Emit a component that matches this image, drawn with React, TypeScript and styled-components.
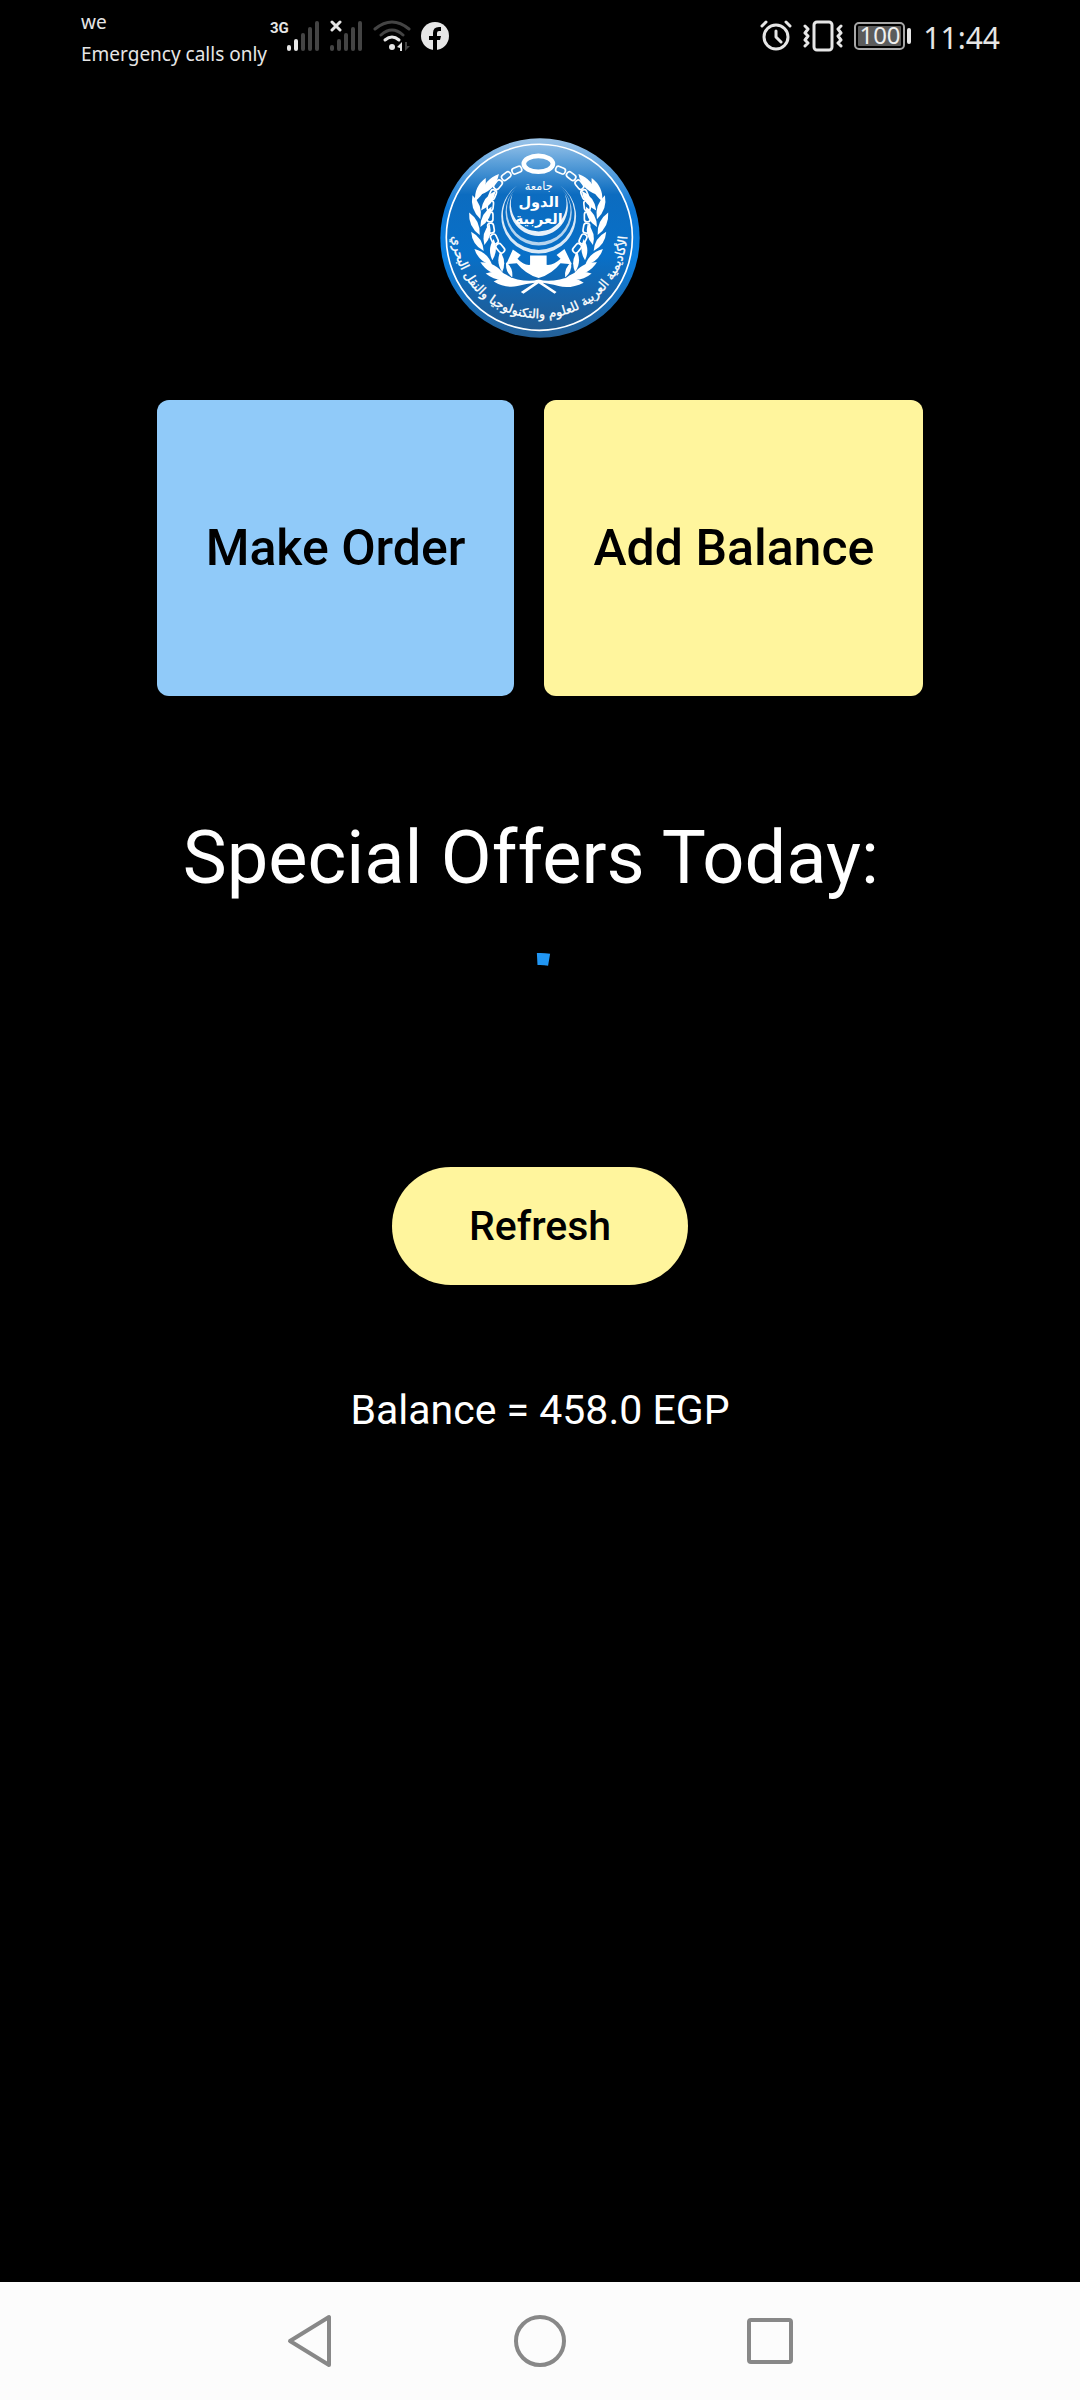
import React from "react";
import styled, { createGlobalStyle } from "styled-components";

const GlobalStyle = createGlobalStyle`
  * { box-sizing: border-box; }
  body { margin: 0; background: #000; font-family: Roboto, "Noto Sans", sans-serif; }
  h1, p { margin: 0; font-weight: 400; }
  button { border: 0; padding: 0; font-family: inherit; cursor: pointer; }
  svg { display: block; flex: none; }
`;

const Screen = styled.div`
  min-height: 100vh;
  display: flex;
  flex-direction: column;
  background: #000;
  color: #fff;
`;

const StatusBar = styled.header`
  height: 72px;
  flex: none;
  display: flex;
  justify-content: space-between;
  align-items: center;
  padding: 0 80px 0 81px;
  color: #e6e6e6;
  font-family: "Noto Sans", sans-serif;
`;

const StatusGroup = styled.div<{ $gap: number }>`
  display: flex;
  align-items: center;
  gap: ${(p) => p.$gap}px;
`;

const Carrier = styled.div`
  font-size: 19px;
  line-height: 32px;
  padding-top: 4px;
  white-space: nowrap;
`;

const Clock = styled.time`
  font-size: 30px;
  line-height: 40px;
  padding-top: 4px;
`;

const Main = styled.main`
  flex: 1;
  display: flex;
  flex-direction: column;
  align-items: center;
  padding-top: 66px;
`;

const Actions = styled.div`
  display: flex;
  gap: 30px;
  margin-top: 62px;
`;

const ActionButton = styled.button<{ $color: string }>`
  height: 296px;
  padding: 0 49px;
  border-radius: 12px;
  background: ${(p) => p.$color};
  color: #000;
  font-size: 50px;
  font-weight: 500;
`;

const Heading = styled.h1`
  margin-top: 118px;
  font-size: 74px;
  line-height: 88px;
  white-space: pre;
`;

const SpinnerBox = styled.div`
  margin-top: 51px;
`;

const RefreshButton = styled.button`
  width: 296px;
  height: 118px;
  margin-top: 94px;
  border-radius: 59px;
  background: #fff59d;
  color: #000;
  font-size: 41px;
  font-weight: 500;
`;

const Balance = styled.p`
  margin-top: 101px;
  font-size: 41px;
  line-height: 48px;
`;

const NavBar = styled.nav`
  height: 118px;
  flex: none;
  display: flex;
  justify-content: center;
  gap: 130px;
  background: #fcfcfc;
`;

const NavButton = styled.button`
  width: 100px;
  height: 118px;
  display: flex;
  align-items: center;
  justify-content: center;
  background: transparent;
`;

const LEAVES: [number, number, number, number][] = [
  [152, 194, 206, 132],
  [134, 214, 166, 144],
  [152, 242, 196, 182],
  [150, 268, 126, 196],
  [150, 292, 184, 230],
  [148, 316, 116, 248],
  [162, 346, 178, 282],
  [160, 364, 122, 306],
  [186, 392, 190, 328],
  [186, 408, 132, 358],
  [216, 428, 210, 366],
  [222, 436, 150, 398],
  [246, 444, 228, 398],
  [244, 446, 166, 432],
];

const CHAIN: [number, number, number][] = [
  [260, 120, -22],
  [228, 138, -38],
  [203, 164, -52],
  [187, 194, -68],
  [180, 227, -84],
  [179, 261, 90],
  [182, 295, 80],
  [192, 328, 65],
  [210, 356, 50],
];

function leafPath([x1, y1, x2, y2]: [number, number, number, number]) {
  const mx = (x1 + x2) / 2;
  const my = (y1 + y2) / 2;
  const nx = (y2 - y1) * 0.28;
  const ny = (x1 - x2) * 0.28;
  return `M${x1} ${y1}Q${mx + nx} ${my + ny} ${x2} ${y2}Q${mx - nx} ${my - ny} ${x1} ${y1}Z`;
}

function Wreath() {
  return (
    <>
      {LEAVES.map((leaf, i) => (
        <path key={i} d={leafPath(leaf)} fill="#fff" />
      ))}
      {CHAIN.map(([x, y, a], i) => (
        <rect
          key={i}
          x={x - 15}
          y={y - 9}
          width="30"
          height="18"
          rx="8"
          fill="none"
          stroke="#fff"
          strokeWidth="5"
          transform={`rotate(${a} ${x} ${y})`}
        />
      ))}
    </>
  );
}

function AcademyLogo() {
  return (
    <svg width="200" height="200" viewBox="28 23 604 604" role="img" aria-label="Academy emblem">
      <defs>
        <linearGradient id="disc" x1="0" y1="0" x2="0" y2="1">
          <stop offset="0" stopColor="#8dbce6" />
          <stop offset="0.1" stopColor="#5a9fd9" />
          <stop offset="0.27" stopColor="#0c6cc0" />
          <stop offset="0.6" stopColor="#0870c8" />
          <stop offset="0.82" stopColor="#1763a8" />
          <stop offset="1" stopColor="#205a90" />
        </linearGradient>
        <linearGradient id="rim" x1="0" y1="0" x2="0" y2="1">
          <stop offset="0" stopColor="#9cc4e8" />
          <stop offset="0.35" stopColor="#0d78d6" />
          <stop offset="0.6" stopColor="#0a80e2" />
          <stop offset="1" stopColor="#245f96" />
        </linearGradient>
        <path id="motto" d="M66 270A265 265 0 1 0 592 270" />
      </defs>
      <circle cx="330" cy="325" r="301" fill="url(#rim)" />
      <circle cx="328" cy="323" r="281" fill="url(#disc)" stroke="#fff" strokeWidth="5" />
      <Wreath />
      <g transform="translate(652 0) scale(-1 1)">
        <Wreath />
      </g>
      <ellipse cx="325" cy="101" rx="44" ry="24" fill="none" stroke="#fff" strokeWidth="14" />
      <g fill="#fff">
        <path d="M262 166A113 113 0 1 0 390 166A108 108 0 1 1 262 166Z" opacity="0.85" />
        <path d="M256 176A100 100 0 1 0 396 176A96 96 0 1 1 256 176Z" opacity="0.7" />
        <path d="M248 190A88 88 0 1 0 404 190A84 84 0 1 1 248 190Z" opacity="0.9" />
        <path d="M248 360L228 404L260 401Q286 434 326 446Q366 434 392 401L426 404L404 358L380 376L392 388Q372 408 350 406L350 378L300 378L300 406Q280 408 262 388L272 376Z" />
        <path d="M190 456Q226 436 262 450Q300 458 326 450Q352 458 390 450Q426 436 462 460Q420 480 386 470Q356 462 338 460L380 488L374 493L326 462L280 493L272 488L314 460Q290 462 262 470Q226 478 190 456Z" />
      </g>
      <g
        fill="#fff"
        fontFamily='"DejaVu Sans", sans-serif'
        textAnchor="middle"
        direction="rtl"
      >
        <text x="326" y="180" fontSize="34">جامعة</text>
        <text x="326" y="230" fontSize="44" fontWeight="700">الدول</text>
        <text x="326" y="282" fontSize="44" fontWeight="700">العربية</text>
        <text fontSize="38" stroke="#fff" strokeWidth="1">
          <textPath href="#motto" startOffset="50%">
            الأكاديمية العربية للعلوم والتكنولوجيا والنقل البحري
          </textPath>
        </text>
      </g>
    </svg>
  );
}

function Signal({ lit, label }: { lit: number; label: "3G" | "none" }) {
  return (
    <svg width={label === "3G" ? 51 : 33} height="40" viewBox={label === "3G" ? "-18 -4 51 40" : "0 -4 33 40"} aria-hidden="true">
      {[6, 12, 18, 24, 30].map((h, i) => (
        <rect key={h} x={i * 7} y={31 - h} width="4" height={h} rx="2" fill={i < lit ? "#e6e6e6" : "#444"} />
      ))}
      {label === "3G" ? (
        <text x="-17" y="13" fill="#e6e6e6" fontSize="15" fontWeight="700" fontFamily="Roboto, sans-serif">
          3G
        </text>
      ) : (
        <path d="M2 2l8 8M10 2l-8 8" stroke="#e6e6e6" strokeWidth="3" strokeLinecap="round" />
      )}
    </svg>
  );
}

function Wifi() {
  return (
    <svg width="38" height="32" viewBox="0 0 38 32" fill="none" strokeLinecap="round" strokeWidth="3" aria-hidden="true">
      <path d="M2 9Q19-5 36 9M8 15Q19 5 30 15" stroke="#444" />
      <path d="M12 20Q19 14 26 20" stroke="#e6e6e6" />
      <circle cx="19" cy="27" r="3" fill="#e6e6e6" />
      <path d="M29 22v9h-2v-3l-3-1z" fill="#e6e6e6" />
      <path d="M32 22v9l5-5h-3v-4z" fill="#444" />
    </svg>
  );
}

function Facebook() {
  return (
    <svg width="28" height="28" viewBox="0 0 28 28" aria-hidden="true">
      <circle cx="14" cy="14" r="14" fill="#e6e6e6" />
      <path d="M12 28V18H8V14H12V11Q12 5 18 5H20V9H18Q16 9 16 11V14H20L19 18H16V28Z" fill="#000" />
    </svg>
  );
}

function Alarm() {
  return (
    <svg width="32" height="32" viewBox="0 0 32 32" fill="none" stroke="#e6e6e6" strokeWidth="3" strokeLinecap="round" strokeLinejoin="round" aria-hidden="true">
      <circle cx="16" cy="17" r="12" />
      <path d="M16 11v6l5 5M2 6l4-4M30 6l-4-4" />
    </svg>
  );
}

function Vibrate() {
  return (
    <svg width="40" height="32" viewBox="0 0 40 32" fill="none" stroke="#e6e6e6" strokeWidth="3" strokeLinecap="round" strokeLinejoin="round" aria-hidden="true">
      <rect x="11" y="2" width="18" height="28" rx="3" />
      <path d="M2 6l3 3-3 4 3 3-3 4 3 3-3 3M38 6l-3 3 3 4-3 3 3 4-3 3 3 3" />
    </svg>
  );
}

function Battery() {
  return (
    <svg width="58" height="40" viewBox="0 -6 58 40" aria-hidden="true">
      <rect x="1" y="1" width="49" height="26" rx="4" fill="none" stroke="#a8a8a8" strokeWidth="2" />
      <rect x="4" y="4" width="43" height="20" rx="1" fill="#5c5c5c" />
      <rect x="53" y="6" width="4" height="16" rx="2" fill="#e6e6e6" />
      <text x="26" y="22" fill="#f0f0f0" fontSize="24" fontFamily='"Noto Sans", sans-serif' textAnchor="middle">
        100
      </text>
    </svg>
  );
}

function Spinner() {
  return (
    <svg width="120" height="120" viewBox="0 0 120 120" role="progressbar" aria-label="Loading offers">
      <circle
        cx="60"
        cy="60"
        r="54"
        fill="none"
        stroke="#2196f3"
        strokeWidth="12"
        strokeDasharray="12 400"
        transform="rotate(-93 60 60)"
      />
    </svg>
  );
}

export default function App() {
  return (
    <Screen>
      <GlobalStyle />
      <StatusBar>
        <StatusGroup $gap={2}>
          <Carrier>
            we
            <br />
            Emergency calls only
          </Carrier>
          <StatusGroup $gap={10}>
            <Signal lit={2} label="3G" />
            <Signal lit={0} label="none" />
            <Wifi />
            <Facebook />
          </StatusGroup>
        </StatusGroup>
        <StatusGroup $gap={11}>
          <Alarm />
          <Vibrate />
          <Battery />
          <Clock>11:44</Clock>
        </StatusGroup>
      </StatusBar>
      <Main>
        <AcademyLogo />
        <Actions>
          <ActionButton $color="#90caf9">Make Order</ActionButton>
          <ActionButton $color="#fff59d">Add Balance</ActionButton>
        </Actions>
        <Heading>{"Special Offers Today: "}</Heading>
        <SpinnerBox>
          <Spinner />
        </SpinnerBox>
        <RefreshButton>Refresh</RefreshButton>
        <Balance>Balance = 458.0 EGP</Balance>
      </Main>
      <NavBar>
        <NavButton aria-label="Back">
          <svg width="48" height="56" viewBox="0 0 48 56" fill="none" stroke="#888" strokeWidth="4" strokeLinejoin="round">
            <path d="M43 4V52L4 28Z" />
          </svg>
        </NavButton>
        <NavButton aria-label="Home">
          <svg width="56" height="56" viewBox="0 0 56 56" fill="none" stroke="#888" strokeWidth="4">
            <circle cx="28" cy="28" r="24" />
          </svg>
        </NavButton>
        <NavButton aria-label="Recent apps">
          <svg width="48" height="48" viewBox="0 0 48 48" fill="none" stroke="#888" strokeWidth="4">
            <rect x="3" y="3" width="42" height="42" rx="2" />
          </svg>
        </NavButton>
      </NavBar>
    </Screen>
  );
}
